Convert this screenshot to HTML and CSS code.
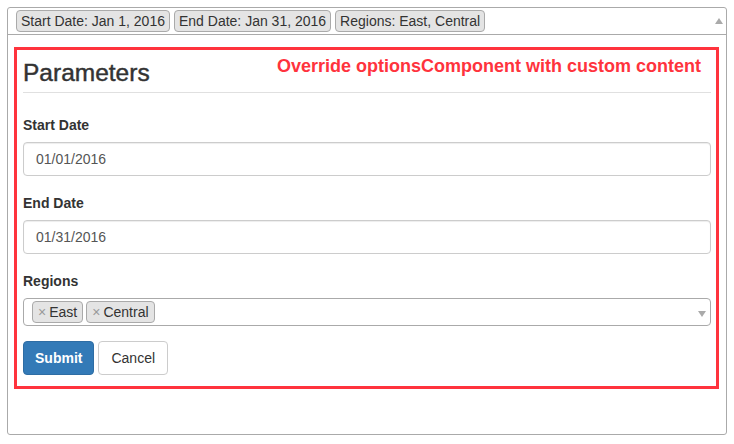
FILE: index.html
```html
<!DOCTYPE html>
<html>
<head>
<meta charset="utf-8">
<link rel="stylesheet" href="styles.css">
</head>
<body>
<div class="widget">
  <div class="summary">
    <span class="pill">Start Date: Jan 1, 2016</span>
    <span class="pill">End Date: Jan 31, 2016</span>
    <span class="pill">Regions: East, Central</span>
    <span class="caret-up"></span>
  </div>
  <div class="options">
    <div class="legend">
      <h3 class="title">Parameters</h3>
      <span class="note">Override optionsComponent with custom content</span>
    </div>
    <div class="group">
      <label class="label">Start Date</label>
      <div class="input">01/01/2016</div>
    </div>
    <div class="group">
      <label class="label">End Date</label>
      <div class="input">01/31/2016</div>
    </div>
    <div class="group last">
      <label class="label">Regions</label>
      <div class="select">
        <span class="tag"><span class="remove">×</span>East</span>
        <span class="tag"><span class="remove">×</span>Central</span>
        <span class="caret-down"></span>
      </div>
    </div>
    <div class="actions">
      <button class="btn primary">Submit</button>
      <button class="btn default">Cancel</button>
    </div>
  </div>
</div>
</body>
</html>
```
FILE: styles.css
```css
* { box-sizing: border-box; }
body {
  margin: 7px;
  font-family: "Liberation Sans", Arial, sans-serif;
  font-size: 14px;
  color: #333;
  background: #fff;
}
.widget {
  width: 720px;
  height: 428px;
  border: 1px solid #aaa;
  border-radius: 3px;
}
.summary {
  display: flex;
  align-items: center;
  gap: 4px;
  padding: 2px 3px 2px 8px;
  border-bottom: 1px solid #aaa;
}
.pill {
  display: inline-block;
  background: #e4e4e4;
  border: 1px solid #aaa;
  border-radius: 4px;
  padding: 0 4px;
  line-height: 20px;
  color: #333;
}
.caret-up {
  margin-left: auto;
  width: 0;
  height: 0;
  border-left: 4px solid transparent;
  border-right: 4px solid transparent;
  border-bottom: 6px solid #aaa;
}
.options {
  margin: 12px 7px 0 6px;
  border: 3px solid #ff333d;
  padding: 0 5px 11px 6px;
}
.legend {
  display: flex;
  justify-content: space-between;
  align-items: flex-start;
  padding: 6px 0 6px 0;
  border-bottom: 1px solid #e0e0e0;
  margin-bottom: 22px;
}
.title {
  margin: 4px 0 0 0;
  font-size: 24.5px;
  font-weight: normal;
  -webkit-text-stroke: 0.45px #333;
  line-height: 26px;
  color: #333;
}
.note {
  color: #ff333d;
  font-weight: bold;
  font-size: 18px;
  line-height: 20px;
  margin-right: 10px;
}
.group { margin-bottom: 17px; }
.group.last { margin-bottom: 15px; }
.label {
  display: block;
  font-weight: bold;
  line-height: 20px;
  margin-bottom: 7px;
}
.input {
  height: 34px;
  border: 1px solid #ccc;
  border-radius: 4px;
  padding: 6px 12px;
  line-height: 20px;
  color: #555;
  box-shadow: inset 0 1px 1px rgba(0,0,0,.075);
}
.select {
  height: 28px;
  border: 1px solid #aaa;
  border-radius: 4px;
  display: flex;
  align-items: flex-start;
  gap: 3px;
  padding: 2px 4px 0 8px;
}
.tag {
  display: inline-block;
  background: #e4e4e4;
  border: 1px solid #aaa;
  border-radius: 4px;
  padding: 0 5px;
  line-height: 20px;
  color: #333;
}
.remove {
  color: #999;
  margin-right: 3px;
}
.caret-down {
  margin-left: auto;
  margin-top: 10px;
  width: 0;
  height: 0;
  border-left: 4px solid transparent;
  border-right: 4px solid transparent;
  border-top: 6px solid #aaa;
}
.actions {
  display: flex;
  gap: 4px;
}
.btn {
  height: 34px;
  padding: 6px 12px;
  font-family: "Liberation Sans", Arial, sans-serif;
  font-size: 14px;
  line-height: 20px;
  border-radius: 4px;
  border: 1px solid #ccc;
}
.btn.primary {
  background: #337ab7;
  border-color: #2e6da4;
  color: #fff;
  font-weight: bold;
  padding: 6px 11px;
}
.btn.default {
  background: #fff;
  color: #333;
}
```
